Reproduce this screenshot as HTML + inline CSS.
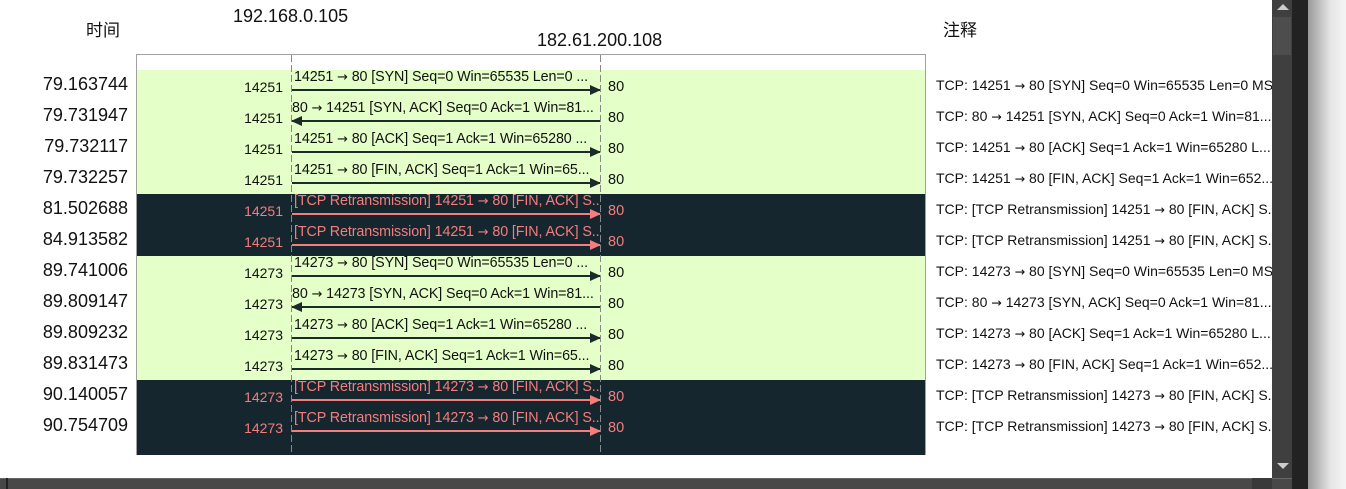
<!DOCTYPE html>
<html><head><meta charset="utf-8"><style>
*{margin:0;padding:0;box-sizing:border-box}
body{width:1346px;height:489px;overflow:hidden;background:#fff;position:relative;font-family:"Liberation Sans","Noto Sans CJK SC",sans-serif;color:#111}
.a{position:absolute;white-space:nowrap}
.ts{position:absolute;right:1218px;font-size:18px;text-align:right}
.row{position:absolute;left:137px;width:788px;height:31px}
.g{background:#e4ffc7}
.d{background:#16262f}
.port{position:absolute;right:1063px;font-size:14px;text-align:right}
.lbl{position:absolute;left:294px;width:305px;overflow:hidden;white-space:nowrap;font-size:14.3px;letter-spacing:-0.1px}
.p80{position:absolute;left:608px;font-size:14.5px}
.cm{position:absolute;left:936px;width:336px;overflow:hidden;white-space:nowrap;font-size:14px}
.line{position:absolute;left:292px;width:308px;height:2px}
.red{color:#f47d7d}
.ar{font-family:"DejaVu Sans",sans-serif;font-size:0.9em}
</style></head><body>
<div class="a" style="left:86px;top:16px;font-size:17px">时间</div>
<div class="a" style="left:233px;top:6px;font-size:18px">192.168.0.105</div>
<div class="a" style="left:537px;top:30px;font-size:18px">182.61.200.108</div>
<div class="a" style="left:943px;top:16px;font-size:17px">注释</div>
<div style="position:absolute;left:136px;top:54px;width:790px;height:401px;border:1px solid #a0a0a0;border-bottom:none"></div>
<div style="position:absolute;left:137px;top:380px;width:788px;height:75px;background:#16262f"></div>
<div id="rows"></div>
<div style="position:absolute;left:291px;top:55px;width:1px;height:400px;background:repeating-linear-gradient(180deg,#888 0 7px,transparent 7px 10px)"></div>
<div style="position:absolute;left:600px;top:55px;width:1px;height:400px;background:repeating-linear-gradient(180deg,#888 0 7px,transparent 7px 10px)"></div>
<div style="position:absolute;left:1272px;top:0;width:20px;height:478px;background:#3f3f3f"></div>
<div style="position:absolute;left:1273px;top:17px;width:18px;height:38px;background:#4d4d4d"></div>
<div style="position:absolute;left:1277px;top:4px;width:0;height:0;border-left:6px solid transparent;border-right:6px solid transparent;border-bottom:6px solid #ccc"></div>
<div style="position:absolute;left:1277px;top:463px;width:0;height:0;border-left:6px solid transparent;border-right:6px solid transparent;border-top:6px solid #ccc"></div>
<div style="position:absolute;left:1292px;top:0;width:16px;height:489px;background:#222"></div>
<div style="position:absolute;left:1308px;top:0;width:38px;height:489px;background:linear-gradient(90deg,#9a9a9a,#e6e6e6 60%,#f4f4f4)"></div>
<div style="position:absolute;left:0;top:478px;width:1292px;height:11px;background:#484848;border-top:1px solid #666"></div>
<div style="position:absolute;left:6px;top:478px;width:2px;height:11px;background:#222"></div>
<div style="position:absolute;left:1252px;top:478px;width:20px;height:11px;background:#3a3a3a"></div>
<script>
var R=[
["79.163744","14251","14251 → 80 [SYN] Seq=0 Win=65535 Len=0 ...",1,"TCP: 14251 → 80 [SYN] Seq=0 Win=65535 Len=0 MSS"],
["79.731947","14251","80 → 14251 [SYN, ACK] Seq=0 Ack=1 Win=81...",0,"TCP: 80 → 14251 [SYN, ACK] Seq=0 Ack=1 Win=81..."],
["79.732117","14251","14251 → 80 [ACK] Seq=1 Ack=1 Win=65280 ...",1,"TCP: 14251 → 80 [ACK] Seq=1 Ack=1 Win=65280 L..."],
["79.732257","14251","14251 → 80 [FIN, ACK] Seq=1 Ack=1 Win=65...",1,"TCP: 14251 → 80 [FIN, ACK] Seq=1 Ack=1 Win=652..."],
["81.502688","14251","[TCP Retransmission] 14251 → 80 [FIN, ACK] S...",2,"TCP: [TCP Retransmission] 14251 → 80 [FIN, ACK] S..."],
["84.913582","14251","[TCP Retransmission] 14251 → 80 [FIN, ACK] S...",2,"TCP: [TCP Retransmission] 14251 → 80 [FIN, ACK] S..."],
["89.741006","14273","14273 → 80 [SYN] Seq=0 Win=65535 Len=0 ...",1,"TCP: 14273 → 80 [SYN] Seq=0 Win=65535 Len=0 MSS"],
["89.809147","14273","80 → 14273 [SYN, ACK] Seq=0 Ack=1 Win=81...",0,"TCP: 80 → 14273 [SYN, ACK] Seq=0 Ack=1 Win=81..."],
["89.809232","14273","14273 → 80 [ACK] Seq=1 Ack=1 Win=65280 ...",1,"TCP: 14273 → 80 [ACK] Seq=1 Ack=1 Win=65280 L..."],
["89.831473","14273","14273 → 80 [FIN, ACK] Seq=1 Ack=1 Win=65...",1,"TCP: 14273 → 80 [FIN, ACK] Seq=1 Ack=1 Win=652..."],
["90.140057","14273","[TCP Retransmission] 14273 → 80 [FIN, ACK] S...",2,"TCP: [TCP Retransmission] 14273 → 80 [FIN, ACK] S..."],
["90.754709","14273","[TCP Retransmission] 14273 → 80 [FIN, ACK] S...",2,"TCP: [TCP Retransmission] 14273 → 80 [FIN, ACK] S..."]];
function A(s){return s.replace(/→/g,'<span class="ar">→</span>');}
var h="";
R.forEach(function(r,i){
var t=70+i*31,dark=r[3]==2,c=dark?"#f47d7d":"#1c2a2a",cls=dark?" red":"";
h+='<div class="row '+(dark?'d':'g')+'" style="top:'+t+'px"></div>';
h+='<div class="ts" style="top:'+(t+4)+'px">'+r[0]+'</div>';
h+='<div class="port'+cls+'" style="top:'+(t+9)+'px">'+r[1]+'</div>';
h+='<div class="lbl'+cls+'" style="top:'+(t-1)+'px;left:'+(r[3]==0?292:294)+'px">'+A(r[2])+'</div>';
h+='<div class="p80'+cls+'" style="top:'+(t+9)+'px">80</div>';
h+='<div class="cm" style="top:'+(t+7)+'px">'+A(r[4])+'</div>';
h+='<div class="line" style="top:'+(t+19)+'px;background:'+c+'"></div>';
if(r[3]==0) h+='<div style="position:absolute;left:291px;top:'+(t+15)+'px;border-top:5px solid transparent;border-bottom:5px solid transparent;border-right:11px solid '+c+'"></div>';
else h+='<div style="position:absolute;left:590px;top:'+(t+15)+'px;border-top:5px solid transparent;border-bottom:5px solid transparent;border-left:11px solid '+c+'"></div>';
});
document.getElementById("rows").innerHTML=h;
</script>
</body></html>
